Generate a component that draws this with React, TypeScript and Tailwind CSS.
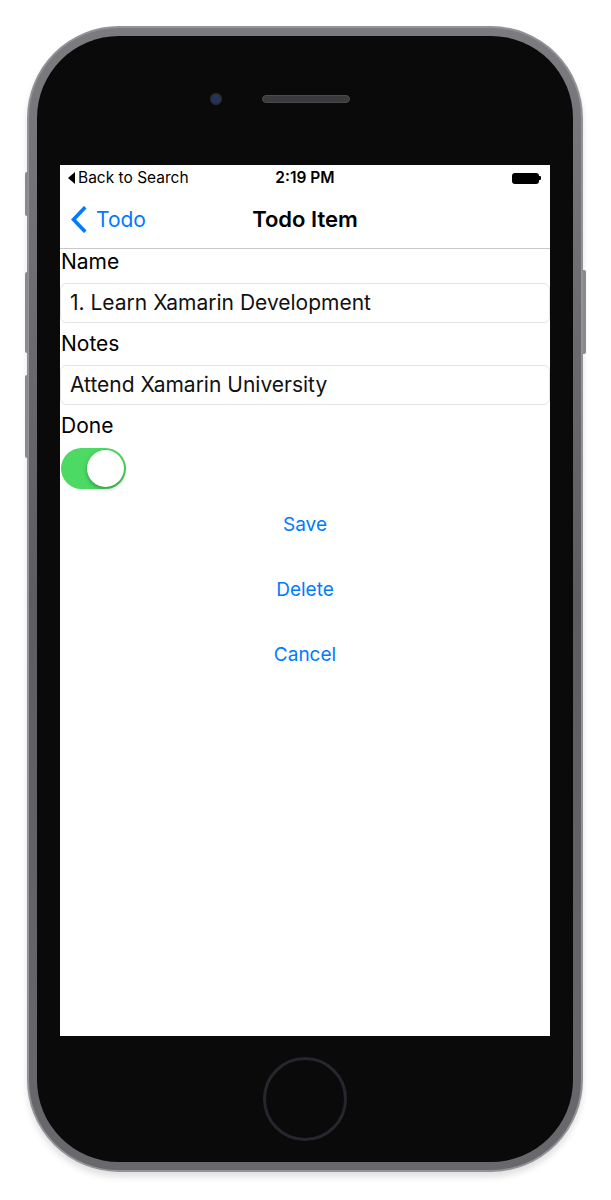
import React from "react"

function Chevron() {
  return (
    <svg width="17" height="27" viewBox="0 0 17 27" fill="none">
      <path d="M14 2.5 L3.5 13.5 L14 24.5" stroke="#007aff" strokeWidth="3.6" strokeLinecap="square" strokeLinejoin="miter" />
    </svg>
  )
}

function Battery() {
  return (
    <div className="flex items-center">
      <div className="w-[27px] h-[11px] rounded-[3px] bg-black" />
      <div className="w-[2px] h-[4px] rounded-r-[1px] bg-black" />
    </div>
  )
}

function Field({ value }: { value: string }) {
  return (
    <div className="h-[40px] rounded-[6px] border border-[#e3e3e6] flex items-center px-[9px] text-[21px] text-[#111]">
      {value}
    </div>
  )
}

function Label({ children }: { children: React.ReactNode }) {
  return <div className="text-[21px] leading-[26px] text-black pl-px">{children}</div>
}

function Toggle() {
  return (
    <div className="w-[65px] h-[41px] mt-px rounded-full bg-[#4cd964] flex items-center justify-end pr-[2px] ml-px">
      <div className="w-[37px] h-[37px] rounded-full bg-white shadow-[0_2px_4px_rgba(0,0,0,0.3)]" />
    </div>
  )
}

function ActionButton({ label }: { label: string }) {
  return (
    <div className="h-[57px] flex items-center justify-center text-[19px] text-[#007aff]">{label}</div>
  )
}

export default function App() {
  return (
    <div className="w-[611px] h-[1200px] bg-white pt-[26px] pl-[27px] font-['Inter',sans-serif]">
      <div className="relative w-[556px] h-[1146px] rounded-[92px] bg-gradient-to-b from-[#7c7c80] via-[#5d5d61] to-[#69696d] border-2 border-[#939397] p-[8px] shadow-[0_5px_6px_rgba(0,0,0,0.12)]">
        {/* hardware buttons */}
        <div className="absolute left-[-4px] top-[144px] w-[3px] h-[44px] rounded-l-[2px] bg-[#8a8a8e]" />
        <div className="absolute left-[-4px] top-[244px] w-[3px] h-[81px] rounded-l-[2px] bg-[#8a8a8e]" />
        <div className="absolute left-[-4px] top-[347px] w-[3px] h-[83px] rounded-l-[2px] bg-[#8a8a8e]" />
        <div className="absolute right-[-5px] top-[242px] w-[3px] h-[84px] rounded-r-[2px] bg-[#8a8a8e]" />

        <div className="h-full rounded-[82px] bg-[#0a0a0a] px-[23px] flex flex-col">
          {/* top bezel */}
          <div className="h-[129px] flex items-center pb-[3px] pl-[150px]">
            <div className="w-[12px] h-[12px] rounded-full bg-[#22355e] border-2 border-[#2e2e33]" />
            <div className="ml-[40px] w-[88px] h-[8px] rounded-full bg-[#3b3b3e] border border-[#4a4a4d]" />
          </div>

          {/* screen */}
          <div className="h-[871px] bg-white flex flex-col overflow-hidden">
            <div className="h-[26px] grid grid-cols-3 items-center text-[15.5px] text-black">
              <div className="flex items-center pl-[8px] gap-[3px] whitespace-nowrap">
                <span className="inline-block w-0 h-0 border-y-[6px] border-y-transparent border-r-[7px] border-r-black" />
                <span>Back to Search</span>
              </div>
              <div className="text-center font-semibold">2:19 PM</div>
              <div className="flex justify-end pr-[9px]">
                <Battery />
              </div>
            </div>

            <div className="h-[58px] grid grid-cols-3 items-center border-b border-[#c8c7cc]">
              <div className="flex items-center pl-[10px] gap-[9px] text-[21px] text-[#007aff]">
                <Chevron />
                <span>Todo</span>
              </div>
              <div className="text-center text-[22px] font-semibold text-black whitespace-nowrap">Todo Item</div>
              <div />
            </div>

            <div className="flex flex-col gap-[8px]">
              <Label>Name</Label>
              <Field value="1. Learn Xamarin Development" />
              <Label>Notes</Label>
              <Field value="Attend Xamarin University" />
              <Label>Done</Label>
              <Toggle />
              <ActionButton label="Save" />
              <ActionButton label="Delete" />
              <ActionButton label="Cancel" />
            </div>
          </div>

          {/* bottom bezel */}
          <div className="flex-1 flex items-center justify-center">
            <div className="w-[84px] h-[84px] rounded-full border-[3px] border-[#25272c]" />
          </div>
        </div>
      </div>
    </div>
  )
}
